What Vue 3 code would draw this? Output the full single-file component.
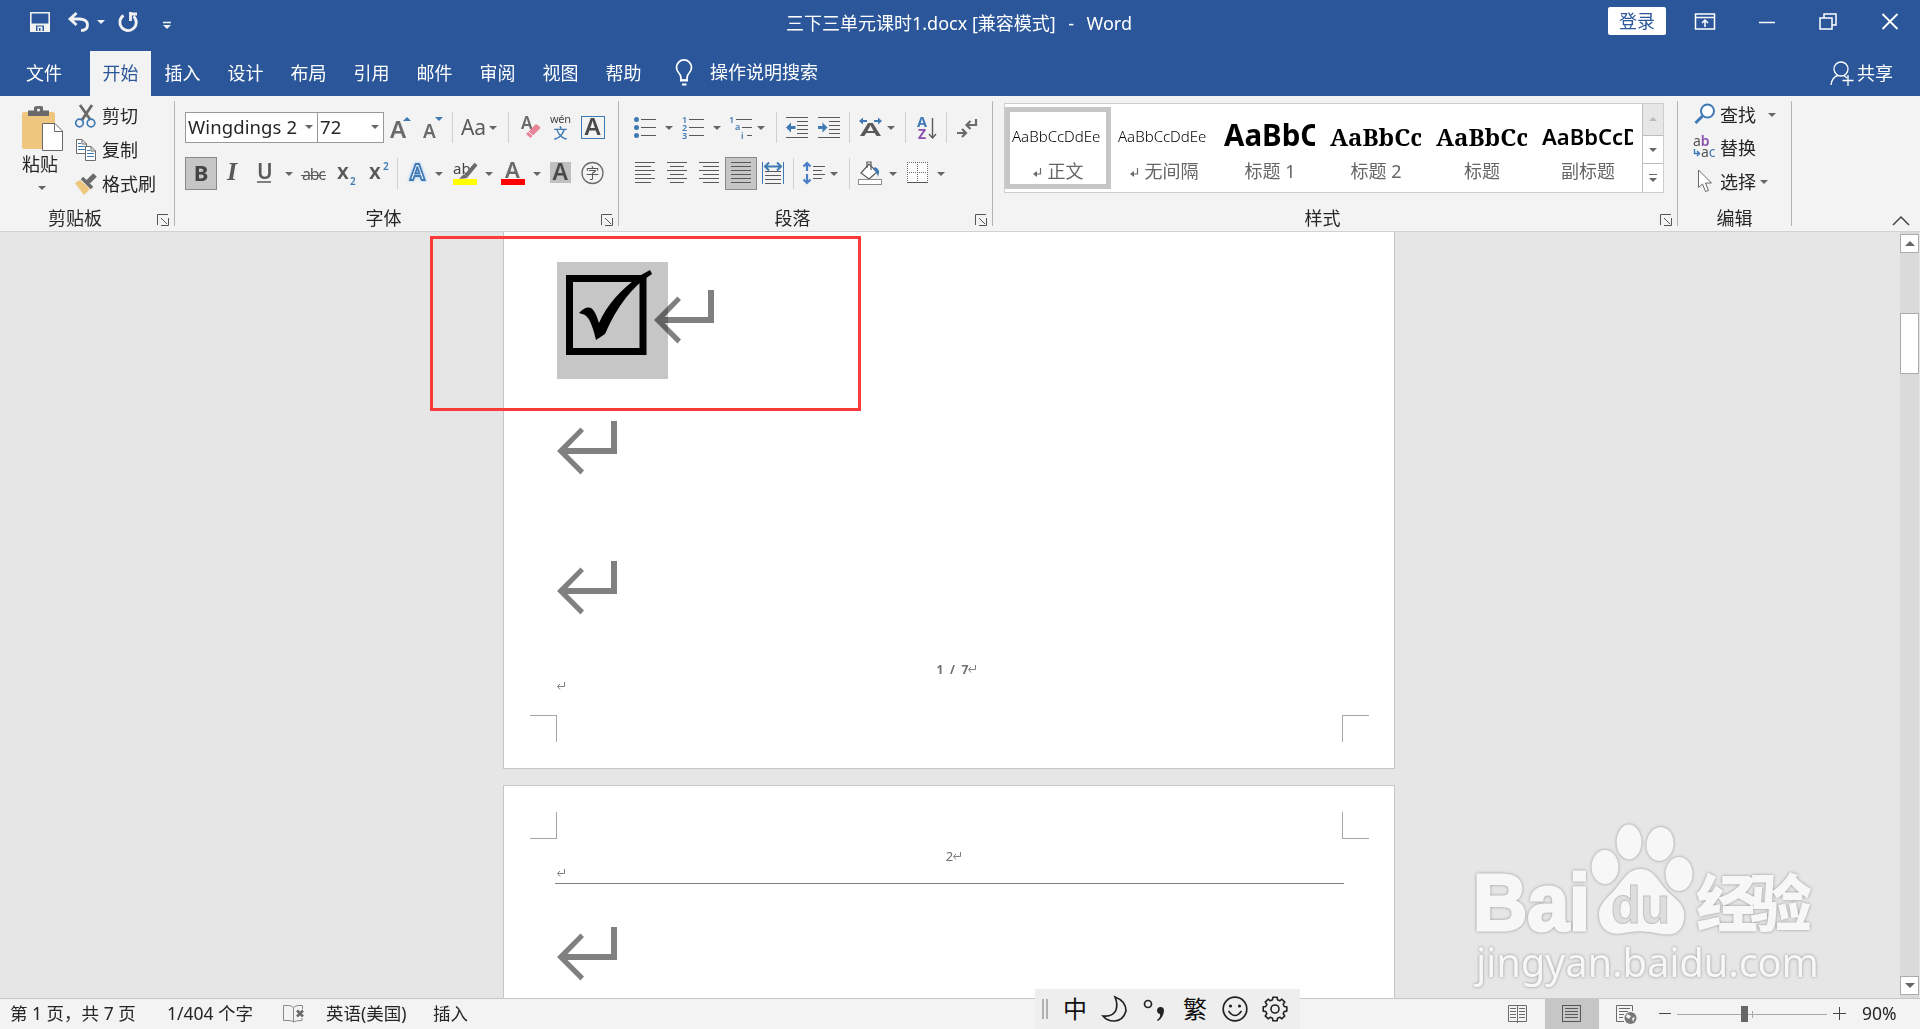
<template>
  <div class="word">
    <header class="title-bar">
      <div class="quick-access">
        <svg v-for="name in quickAccess" :key="name" :class="'qa-' + name" :width="icons[name].w" height="25" v-html="icons[name].body"></svg>
      </div>
      <div class="doc-title">三下三单元课时1.docx [兼容模式]<span class="dash">-</span>Word</div>
      <button class="login">登录</button>
      <div class="window-controls">
        <svg v-for="name in windowControls" :key="name" width="22" height="25" v-html="icons[name].body"></svg>
      </div>
    </header>

    <nav class="tab-bar">
      <span class="tab file">文件</span>
      <span class="tab active">开始</span>
      <span class="tab" v-for="tab in tabs" :key="tab">{{ tab }}</span>
      <svg class="bulb" width="20" height="30" v-html="icons.bulb.body"></svg>
      <span class="tell-me">操作说明搜索</span>
      <span class="share"><svg width="26" height="26" v-html="icons.share.body"></svg>共享</span>
    </nav>

    <section class="ribbon">
      <!-- 剪贴板 -->
      <div class="group clipboard">
        <div class="group-body">
          <div class="paste">
            <svg width="44" height="48" v-html="icons.paste.body"></svg>
            <span>粘贴</span>
            <i class="caret"></i>
          </div>
          <div class="side-list">
            <div v-for="item in clipboard" :key="item.label">
              <svg width="27" height="27" v-html="icons[item.icon].body"></svg>{{ item.label }}
            </div>
          </div>
        </div>
        <div class="group-name">剪贴板</div>
        <svg class="launcher" width="12" height="12" v-html="icons.launcher.body"></svg>
      </div>

      <!-- 字体 -->
      <div class="group font">
        <div class="group-body rows">
          <div class="tool-row font-top">
            <div class="combo name">Wingdings 2<i class="caret"></i></div>
            <div class="combo size">72<i class="caret"></i></div>
            <template v-for="(name, i) in fontTop" :key="i">
              <i v-if="name === 'caret'" class="caret"></i>
              <i v-else-if="name === 'sep'" class="sep"></i>
              <svg v-else :width="icons[name].w" height="25" v-html="icons[name].body"></svg>
            </template>
          </div>
          <div class="tool-row font-bottom">
            <div class="pressed">B</div>
            <template v-for="(name, i) in fontBottom" :key="i">
              <i v-if="name === 'caret'" class="caret"></i>
              <i v-else-if="name === 'sep'" class="sep"></i>
              <svg v-else :width="icons[name].w" height="25" v-html="icons[name].body"></svg>
            </template>
          </div>
        </div>
        <div class="group-name">字体</div>
        <svg class="launcher" width="12" height="12" v-html="icons.launcher.body"></svg>
      </div>

      <!-- 段落 -->
      <div class="group paragraph">
        <div class="group-body rows">
          <div class="tool-row para-top">
            <template v-for="(name, i) in paraTop" :key="i">
              <i v-if="name === 'caret'" class="caret"></i>
              <i v-else-if="name === 'sep'" class="sep"></i>
              <svg v-else :width="icons[name].w" height="25" v-html="icons[name].body"></svg>
            </template>
          </div>
          <div class="tool-row para-bottom">
            <template v-for="(name, i) in paraBottom" :key="i">
              <i v-if="name === 'caret'" class="caret"></i>
              <i v-else-if="name === 'sep'" class="sep"></i>
              <div v-else-if="name === 'justify'" class="pressed">
                <svg width="20" height="25" v-html="icons.justify.body"></svg>
              </div>
              <svg v-else :width="icons[name].w" height="25" v-html="icons[name].body"></svg>
            </template>
          </div>
        </div>
        <div class="group-name">段落</div>
        <svg class="launcher" width="12" height="12" v-html="icons.launcher.body"></svg>
      </div>

      <!-- 样式 -->
      <div class="group styles">
        <div class="group-body">
          <div class="gallery">
            <div class="style-card" v-for="(item, index) in styleList" :key="item.name" :class="{ selected: index === 0 }">
              <div class="sample" :class="item.cls"><span>{{ item.sample }}</span></div>
              <div class="style-name">
                <svg v-if="item.mark" width="12" height="12" v-html="icons.mark.body"></svg>{{ item.name }}
              </div>
            </div>
            <div class="gallery-scroll">
              <div class="off"><i class="caret up"></i></div>
              <div><i class="caret"></i></div>
              <div class="more"><i class="caret"></i></div>
            </div>
          </div>
        </div>
        <div class="group-name">样式</div>
        <svg class="launcher" width="12" height="12" v-html="icons.launcher.body"></svg>
      </div>

      <!-- 编辑 -->
      <div class="group editing">
        <div class="group-body side-list">
          <div v-for="item in editing" :key="item.label" :class="item.icon">
            <svg width="27" height="27" v-html="icons[item.icon].body"></svg>{{ item.label }}<i v-if="item.caret" class="caret"></i>
          </div>
        </div>
        <div class="group-name">编辑</div>
      </div>
      <svg class="collapse" width="18" height="12" v-html="icons.collapse.body"></svg>
    </section>

    <main class="workspace">
      <div class="pages">
        <article class="page first">
          <div class="line big">
            <span class="selection">
              <svg width="111" height="117" v-html="icons.checkbox.body"></svg>
            </span>
            <svg class="return overlap" width="60" height="54" viewBox="0 0 60 54"><path :d="returnPath" /></svg>
          </div>
          <div class="line second">
            <svg class="return" width="60" height="54" viewBox="0 0 60 54"><path :d="returnPath" /></svg>
          </div>
          <div class="line third">
            <svg class="return" width="60" height="54" viewBox="0 0 60 54"><path :d="returnPath" /></svg>
          </div>
          <div class="page-no"><b>1 / 7</b><svg width="9" height="9" v-html="icons.smallReturn.body"></svg></div>
          <div class="line small"><svg width="9" height="9" v-html="icons.smallReturn.body"></svg></div>
          <i class="crop bottom-left"></i>
          <i class="crop bottom-right"></i>
        </article>
        <article class="page second-page">
          <i class="crop top-left"></i>
          <i class="crop top-right"></i>
          <div class="page-no">2<svg width="9" height="9" v-html="icons.smallReturn.body"></svg></div>
          <div class="line header-end"><svg width="9" height="9" v-html="icons.smallReturn.body"></svg></div>
          <svg class="return" width="60" height="54" viewBox="0 0 60 54"><path :d="returnPath" /></svg>
        </article>
      </div>
      <div class="scrollbar">
        <div class="scroll-btn"><i class="caret up"></i></div>
        <div class="thumb"></div>
        <div class="scroll-btn down"><i class="caret"></i></div>
      </div>
      <div class="red-box"></div>
      <div class="watermark">
        <svg width="360" height="180" viewBox="0 0 360 180">
          <g class="paw">
            <ellipse cx="135" cy="89" rx="13.5" ry="17" />
            <ellipse cx="159" cy="64" rx="12.5" ry="17.5" />
            <ellipse cx="190" cy="66" rx="13.5" ry="17" transform="rotate(8 190 66)" />
            <ellipse cx="209" cy="96" rx="13.5" ry="17" />
            <path d="M171 91C184 91 188 104 199 115C210 124 216 130 214 141C212 155 203 158 191 156Q172 151 154 155C139 158 130 151 129 138C128 126 137 121 147 109C155 99 159 91 171 91Z" />
          </g>
          <text class="bai" x="3" y="152" textLength="117" lengthAdjust="spacingAndGlyphs">Bai</text>
          <text class="du" x="141" y="145" textLength="59" lengthAdjust="spacingAndGlyphs">du</text>
          <text class="jingyan" x="226" y="149" textLength="116">经验</text>
          <text class="site" x="6" y="199" textLength="343">jingyan.baidu.com</text>
        </svg>
      </div>
    </main>

    <footer class="status-bar">
      <span class="s-page">第 1 页，共 7 页</span>
      <span class="s-words">1/404 个字</span>
      <svg class="s-proof" width="22" height="20" v-html="icons.proof.body"></svg>
      <span class="s-lang">英语(美国)</span>
      <span class="s-mode">插入</span>
      <div class="view-modes">
        <svg width="20" height="20" v-html="icons.readView.body"></svg>
        <div class="current"><svg width="20" height="20" v-html="icons.printView.body"></svg></div>
        <svg width="21" height="20" v-html="icons.webView.body"></svg>
      </div>
      <svg class="zoom" width="187" height="20" v-html="icons.zoom.body"></svg>
      <span class="percent">90%</span>
    </footer>

    <div class="ime">
      <i class="grip"></i>
      <span>中</span>
      <svg width="26" height="28" v-html="icons.moon.body"></svg>
      <svg width="24" height="28" v-html="icons.punct.body"></svg>
      <span class="trad">繁</span>
      <svg width="26" height="28" v-html="icons.smile.body"></svg>
      <svg class="gear" width="26" height="28" v-html="icons.gear.body"></svg>
    </div>
  </div>
</template>

<script setup>
const tabs = ['插入', '设计', '布局', '引用', '邮件', '审阅', '视图', '帮助']
const quickAccess = ['save', 'undo', 'qaCaret', 'redo', 'customize']
const windowControls = ['ribbonDisplay', 'minimize', 'restore', 'close']

const clipboard = [
  { icon: 'cut', label: '剪切' },
  { icon: 'copy', label: '复制' },
  { icon: 'brush', label: '格式刷' }
]

const fontTop = ['grow', 'shrink', 'sep', 'changeCase', 'caret', 'sep', 'eraser', 'pinyin', 'boxA']
const fontBottom = ['italic', 'underline', 'caret', 'strike', 'sub', 'sup', 'sep', 'effect', 'caret', 'highlight', 'caret', 'fontColor', 'caret', 'shadeA', 'circled']
const paraTop = ['bullets', 'caret', 'numbers', 'caret', 'levels', 'caret', 'sep', 'outdent', 'indent', 'sep', 'asian', 'caret', 'sep', 'sort', 'sep', 'marks']
const paraBottom = ['left', 'center', 'right', 'justify', 'distribute', 'sep', 'spacing', 'caret', 'sep', 'bucket', 'caret', 'borders', 'caret']

const styleList = [
  { name: '正文', sample: 'AaBbCcDdEe', cls: 'body', mark: true },
  { name: '无间隔', sample: 'AaBbCcDdEe', cls: 'body', mark: true },
  { name: '标题 1', sample: 'AaBbC', cls: 'h1' },
  { name: '标题 2', sample: 'AaBbCc', cls: 'h2' },
  { name: '标题', sample: 'AaBbCc', cls: 'h2' },
  { name: '副标题', sample: 'AaBbCcD', cls: 'subtitle' }
]

const editing = [
  { icon: 'find', label: '查找', caret: true },
  { icon: 'replace', label: '替换' },
  { icon: 'select', label: '选择', caret: true }
]

// 回车符
const returnPath = 'M54 0H60V33H10.5L27 49.5L23.5 53.5L0 30L23.5 6.5L27 10L10.5 27H54Z'

// 画一组水平线：[x1, x2, y]
function lines(list, color = '#595959') {
  return list.map(([a, b, y]) => `<path d="M${a} ${y + 0.5}H${b}" stroke="${color}"/>`).join('')
}

const blue = '#3f7ab5'
const arrowLeft = `<path d="M0 11.5L5 6.5V10H9.5V13H5V16.5Z" fill="${blue}"/>`

const icons = {
  save: { w: 20, body: '<path d="M.8 .8H19.200V19.200H.8Z" fill="none" stroke="#f2f2f2" stroke-width="1.600"/><path d="M1 11.500H19V19.500H1Z" fill="#f2f2f2"/><path d="M6 13.500H14V19H6Z" fill="#2b579a"/><path d="M7.500 14.500H12.500V19H10.500V16H9V19H7.500Z" fill="#f2f2f2"/>' },
  undo: { w: 22, body: '<path d="M8.500 1L2 7L8.500 13M2 7H12Q19.500 7.500 19.500 13T13 18.500" fill="none" stroke="#f2f2f2" stroke-width="2.800"/>' },
  qaCaret: { w: 9, body: '<path d="M0 8H8L4 12Z" fill="#f2f2f2"/>' },
  redo: { w: 22, body: '<path d="M5.500 3.500A8.200 8.200 0 1 0 15.500 4.200M12.500 0V9M11.500 2H19" fill="none" stroke="#f2f2f2" stroke-width="2.800"/>' },
  customize: { w: 10, body: '<path d="M1 10.500H9" stroke="#f2f2f2" stroke-width="1.500"/><path d="M1 13H9L5 17Z" fill="#f2f2f2"/>' },
  ribbonDisplay: { body: '<path d="M1.500 2H20.500V17H1.500ZM1.500 5.500H20.500M11 15V8.500M8 11L11 8L14 11" fill="none" stroke="#fff" stroke-width="1.500"/>' },
  minimize: { body: '<path d="M3 10.500H19" stroke="#fff" stroke-width="1.500"/>' },
  restore: { body: '<path d="M3 6H15V17H3ZM7 6V2H19V13H15" fill="none" stroke="#fff" stroke-width="1.500"/>' },
  close: { body: '<path d="M3.500 2L18.500 17M18.500 2L3.500 17" stroke="#fff" stroke-width="1.800"/>' },
  bulb: { body: '<path d="M7 20V18Q7 15 4.500 12.500A7.500 7.500 0 1 1 15.500 12.500Q13 15 13 18V20Z" fill="none" stroke="#fff" stroke-width="1.700"/><path d="M6 20.500H14M8 24.500H12.500" stroke="#fff" stroke-width="2"/>' },
  share: { body: '<circle cx="11" cy="8" r="7" fill="none" stroke="#fff" stroke-width="1.300"/><path d="M1 24Q2 16 8 14.500M14 14.500L17 17M18 14V25M12.500 19.500H23.500" fill="none" stroke="#fff" stroke-width="1.300"/>' },
  paste: { body: '<rect x="1" y="7" width="33" height="37" rx="2" fill="#eec67d"/><path d="M7 11V5.500H13V2Q14 1 18 1T22 2V5.500H28V11Z" fill="#6a6a6a"/><circle cx="17.500" cy="5" r="1.500" fill="#f3f3f3"/><path d="M21.500 18.500H34L41.500 26V45.500H21.500Z" fill="#fff" stroke="#6a6a6a"/><path d="M33.500 18.500V26.500H41.500" fill="none" stroke="#6a6a6a"/>' },
  cut: { body: '<path d="M5 2L15.500 17M17 2L7 17" stroke="#6a6a6a" stroke-width="2.800"/><circle cx="4.500" cy="20" r="3.800" fill="none" stroke="#3f7ab5" stroke-width="1.700"/><circle cx="16" cy="20" r="3.800" fill="none" stroke="#3f7ab5" stroke-width="1.700"/>' },
  copy: { body: '<path d="M1.500 2.500H7L11.500 7V16.500H1.500ZM7 2.500V7H11.500" fill="#fff" stroke="#6a6a6a"/><path d="M3 6.500H6M3 9.500H10M3 12.500H10" stroke="#3f7ab5"/><path d="M10.500 9.500H16L20.500 14V23.500H10.500ZM16 9.500V14H20.500" fill="#fff" stroke="#6a6a6a"/><path d="M12 13.500H15M12 16.500H19M12 19.500H19" stroke="#3f7ab5"/>' },
  brush: { body: '<path d="M0 12L5 9L15 18L9 24Z" fill="#eec67d"/><path d="M20 4L13 11" stroke="#6a6a6a" stroke-width="5"/><path d="M7 7L17 17" stroke="#6a6a6a" stroke-width="3.500"/>' },
  launcher: { body: '<path d="M.5 11V.5H11M4 4L10 10M11.500 4V11.500H4" fill="none" stroke="#555"/>' },
  collapse: { body: '<path d="M1 10L9 2L17 10" fill="none" stroke="#444" stroke-width="1.500"/>' },
  find: { body: '<circle cx="14.500" cy="10" r="6.500" fill="#fff" stroke="#3f7ab5" stroke-width="2"/><path d="M9.500 15L2.500 22" stroke="#3f7ab5" stroke-width="3"/>' },
  replace: { body: '<text x="0" y="11" font-size="14" fill="#555">a<tspan fill="#8a4fae" font-weight="600">b</tspan></text><text x="8" y="22" font-size="14" fill="#555">a<tspan fill="#3f7ab5">c</tspan></text><path d="M1.500 14V18.500H6M4 16L6.500 18.500L4 21" fill="none" stroke="#3f7ab5" stroke-width="1.400"/>' },
  select: { body: '<path d="M5.500 2V19.500L9.500 16L12.500 23.500L15.500 22.500L12.500 15H18.500Z" fill="#fff" stroke="#6a6a6a"/>' },

  grow: { w: 22, body: '<text x="1" y="23" font-size="24" font-weight="600" fill="#6a6a6a">A</text><path d="M14 6L18 2L22 6Z" fill="#3f7ab5"/>' },
  shrink: { w: 22, body: '<text x="1" y="23" font-size="19" font-weight="600" fill="#6a6a6a">A</text><path d="M13 2H21L17 6Z" fill="#3f7ab5"/>' },
  changeCase: { w: 29, body: '<text x="1" y="20" font-size="21" fill="#595959" textLength="25">Aa</text>' },
  eraser: { w: 22, body: '<text x="0" y="14" font-size="17" font-weight="600" fill="#6a6a6a">A</text><path d="M5 19L15 9Q19 11 19.500 13L9.500 23Z" fill="#e8849a"/><path d="M7 16L13 22" stroke="#f3f3f3"/>' },
  pinyin: { w: 24, body: '<text x="1" y="8" font-size="11" fill="#444" textLength="21">wén</text><text x="4.500" y="22.500" font-size="14" fill="#3f7ab5" font-weight="500">文</text>' },
  boxA: { w: 24, body: '<rect x=".5" y="1.500" width="23" height="22" fill="none" stroke="#3f7ab5"/><text x="3.500" y="20" font-size="24" font-weight="600" fill="#4a4a4a">A</text>' },
  italic: { w: 20, body: '<text x="3" y="19" font-size="26" font-style="italic" font-weight="bold" fill="#595959" font-family="Liberation Serif">I</text>' },
  underline: { w: 20, body: '<text x="1" y="18" font-size="21" font-weight="600" fill="#595959">U</text><path d="M1 21H15" stroke="#595959" stroke-width="1.500"/>' },
  strike: { w: 26, body: '<text x="1" y="19" font-size="16" fill="#595959" textLength="24">abc</text><path d="M0 14.500H25" stroke="#595959"/>' },
  sub: { w: 22, body: '<text x="0" y="18" font-size="21" font-weight="600" fill="#595959">x</text><text x="13" y="24" font-size="10" fill="#3f7ab5" font-weight="600">2</text>' },
  sup: { w: 22, body: '<text x="0" y="18" font-size="21" font-weight="600" fill="#595959">x</text><text x="14" y="9" font-size="10" fill="#3f7ab5" font-weight="600">2</text>' },
  effect: { w: 24, body: '<text x="4" y="19" font-size="22" font-weight="600" fill="#fff" stroke="#3f7ab5" stroke-width="1.800" style="filter:drop-shadow(0 0 1.5px #8fc0f0)">A</text>' },
  highlight: { w: 26, body: '<text x="1" y="13" font-size="15" fill="#444">ab</text><path d="M24 3L14 15" stroke="#6a6a6a" stroke-width="4"/><path d="M12 13L16 17L7 18Z" fill="#6a6a6a"/><path d="M1 18H25V24H1Z" fill="#ff0"/>' },
  fontColor: { w: 24, body: '<text x="4" y="17" font-size="22" font-weight="600" fill="#6a6a6a">A</text><path d="M0 18H24V24H0Z" fill="red"/>' },
  shadeA: { w: 22, body: '<path d="M0 1H21V22H0Z" fill="#c0c0c0"/><text x="2.500" y="19" font-size="23" font-weight="600" fill="#4a4a4a">A</text>' },
  circled: { w: 24, body: '<circle cx="11.500" cy="12" r="10.500" fill="none" stroke="#6a6a6a" stroke-width="1.300"/><text x="4.800" y="17" font-size="13.500" fill="#595959">字</text>' },

  bullets: { w: 24, body: [4, 12, 20].map(y => `<circle cx="2.500" cy="${y + 0.5}" r="2.500" fill="${blue}"/>`).join('') + lines([[7, 22, 4], [7, 22, 12], [7, 22, 20]]) },
  numbers: { w: 24, body: [1, 2, 3].map(n => `<text x="0" y="${n * 8}" font-size="9" font-weight="600" fill="${blue}">${n}</text>`).join('') + lines([[7, 22, 4], [7, 22, 12], [7, 22, 20]]) },
  levels: { w: 25, body: `<text x="0" y="8" font-size="9" font-weight="600" fill="${blue}">1</text><text x="6" y="15" font-size="9" font-weight="600" fill="${blue}">a</text><text x="12" y="24" font-size="9" font-weight="600" fill="${blue}">i</text>` + lines([[7, 23, 4], [13, 23, 12], [18, 23, 20]]) },
  outdent: { w: 24, body: lines([[0, 22, 2], [11, 22, 6], [11, 22, 10], [11, 22, 14], [11, 22, 18], [0, 22, 22]]) + `<g transform="translate(0 1)">${arrowLeft}</g>` },
  indent: { w: 24, body: lines([[0, 22, 2], [11, 22, 6], [11, 22, 10], [11, 22, 14], [11, 22, 18], [0, 22, 22]]) + `<g transform="matrix(-1 0 0 1 9.500 1)">${arrowLeft}</g>` },
  asian: { w: 24, body: '<text x="1" y="21" font-size="17" font-weight="600" fill="#595959" textLength="21" lengthAdjust="spacingAndGlyphs">A</text><path d="M0 6L4 2.500V9.500ZM23 6L19 2.500V9.500Z" fill="#3f7ab5"/><path d="M2 6H8M15 6H21" stroke="#3f7ab5" stroke-width="2"/>' },
  sort: { w: 22, body: '<text x="0" y="12" font-size="14.500" font-weight="bold" fill="#3f7ab5">A</text><text x="1" y="24" font-size="14" font-weight="bold" fill="#8a4fae">Z</text><path d="M15.500 3V23M12 19L15.500 23L19 19" fill="none" stroke="#595959" stroke-width="1.400"/>' },
  marks: { w: 22, body: '<path d="M19 4V10H10M13.500 6L9.500 10L13.500 14" fill="none" stroke="#6a6a6a" stroke-width="2.200"/><path d="M0 18H8M5 14L9 18L5 22" fill="none" stroke="#6a6a6a" stroke-width="2.200"/>' },
  left: { w: 22, body: lines([[0, 20, 1], [0, 16, 5], [0, 20, 9], [0, 16, 13], [0, 20, 17], [0, 16, 21]]) },
  center: { w: 22, body: lines([[0, 20, 1], [3, 17, 5], [0, 20, 9], [3, 17, 13], [0, 20, 17], [3, 17, 21]]) },
  right: { w: 22, body: lines([[0, 20, 1], [4, 20, 5], [0, 20, 9], [4, 20, 13], [0, 20, 17], [4, 20, 21]]) },
  justify: { w: 20, body: lines([[0, 20, 1], [0, 20, 5], [0, 20, 9], [0, 20, 13], [0, 20, 17], [0, 20, 21]]) },
  distribute: { w: 24, body: '<path d="M.5 1V23M21.500 1V23" stroke="#3f7ab5"/><path d="M3 5.500H19M7 1.500L3 5.500L7 9.500M15 1.500L19 5.500L15 9.500" fill="none" stroke="#3f7ab5" stroke-width="2"/>' + lines([[3, 19, 10], [3, 19, 14], [3, 19, 18], [3, 19, 22]]) },
  spacing: { w: 26, body: '<path d="M5 2V10M1.500 5.500L5 2L8.500 5.500M5 13V22M1.500 18.500L5 22L8.500 18.500" fill="none" stroke="#4a7fc8" stroke-width="2.200"/>' + lines([[11, 23, 5], [11, 20, 9], [11, 23, 13], [11, 20, 17]]) },
  bucket: { w: 26, body: '<path d="M4 12L12 3L20 11L12 18Z" fill="#fff" stroke="#595959" stroke-width="1.200"/><path d="M10 7V1H14V9" fill="none" stroke="#595959" stroke-width="1.200"/><path d="M18 6Q24 8 21 16Q20 11 16 8Z" fill="#3f7ab5"/><rect x="1.500" y="18.500" width="23" height="5" fill="#fff" stroke="#8a8a8a"/>' },
  borders: { w: 22, body: '<path d="M0 1H21V22H0Z" fill="#fff"/><path d="M0 1.500H21M0 11.500H21M.5 1V21M10.500 1V21M20.500 1V21" stroke="#6a6a6a" stroke-dasharray="1 1"/><path d="M0 21.500H21" stroke="#555"/>' },
  mark: { body: '<path d="M7.500 3V9H3" fill="none" stroke="#6a6a6a" stroke-width="1.200"/><path d="M0 9L4 6V12Z" fill="#6a6a6a"/>' },

  checkbox: { body: '<rect x="12.500" y="16.500" width="73.500" height="73" fill="none" stroke="#000" stroke-width="7"/><path d="M22 51Q29 44 34 46Q38 48 42 61Q53 35 84 13L93 8L95 12Q66 30 48 72L39 78Q33 52 25 52Z" fill="#000"/>' },
  smallReturn: { body: '<path d="M7.500 0V4.500H1M3 2L.5 4.500L3 7.500" fill="none" stroke="#808080"/>' },
  proof: { body: '<path d="M10.500 3.500Q8 1.500 6 1.500H.5V16.500H6Q9 16.500 10.500 18V3.500Q13 1.500 15 1.500H19.500V5M10.500 18Q12 16.500 19 16.500V14" fill="none" stroke="#8a8a8a"/><path d="M14 6.500L20 12.500M20 6.500L14 12.500" stroke="#6a6a6a" stroke-width="2.500"/>' },
  readView: { body: '<path d="M.5 1.500H9.500V17.500H.5ZM9.500 1.500H18.500V17.500H9.500Z" fill="none" stroke="#6a6a6a"/><path d="M2 4.500H8M2 7.500H8M2 10.500H8M2 13.500H8M11 4.500H17M11 7.500H17M11 10.500H17M11 13.500H17M9.500 1V19" stroke="#6a6a6a"/>' },
  printView: { body: '<rect x=".5" y="1.500" width="18" height="16" fill="none" stroke="#555"/>' + lines([[3, 16, 4], [3, 16, 7], [3, 16, 10], [3, 16, 13]]) },
  webView: { body: '<path d="M8 17.500H.5V1.500H16.500V7" fill="none" stroke="#6a6a6a"/><path d="M3 4.500H14M3 7.500H12M3 10.500H8M3 13.500H7" stroke="#6a6a6a"/><circle cx="14.500" cy="14" r="6" fill="#777"/><path d="M11 10L15 12L13 15L10 13ZM16 14L19 13L17 18Z" fill="#f3f3f3"/>' },
  zoom: { body: '<path d="M0 9.500H12M174 9.500H187M180.500 3V16" stroke="#444"/><path d="M18 10.500H168" stroke="#aaa"/><path d="M93.500 7V14" stroke="#aaa"/><rect x="82" y="2" width="7" height="16" fill="#666"/>' },

  moon: { body: '<path d="M13 2Q24 6 24 16Q21 26 12 26Q5 26 1 21Q11 22 14 15Q16 9 13 2Z" fill="none" stroke="#222" stroke-width="1.700"/>' },
  punct: { body: '<circle cx="5" cy="9" r="3.500" fill="none" stroke="#222" stroke-width="1.700"/><path d="M14 25Q18 22 17 19A3.500 3.500 0 1 1 21 15Q21 22 15 26Z" fill="#222"/>' },
  smile: { body: '<circle cx="13" cy="14" r="11.800" fill="none" stroke="#222" stroke-width="1.700"/><circle cx="8.500" cy="11" r="1.600" fill="#222"/><circle cx="17.500" cy="11" r="1.600" fill="#222"/><path d="M6.500 16Q13 25 19.500 16" fill="none" stroke="#222" stroke-width="1.600"/>' },
  gear: { body: `<path d="${gearPath()}" fill="none" stroke="#222" stroke-width="1.600" stroke-linejoin="round"/><circle cx="13" cy="14" r="4" fill="none" stroke="#222" stroke-width="1.600"/>` }
}

// 八齿齿轮轮廓
function gearPath() {
  const points = []
  for (let i = 0; i < 8; i++) {
    const steps = [[-15, 9.5], [-10, 12], [10, 12], [15, 9.5]]
    for (const [offset, r] of steps) {
      const a = ((i * 45 + offset) * Math.PI) / 180
      points.push(`${(13 + r * Math.cos(a)).toFixed(1)} ${(14 + r * Math.sin(a)).toFixed(1)}`)
    }
  }
  return 'M' + points.join('L') + 'Z'
}
</script>

<style>
body {
  margin: 0;
  overflow: hidden;
}
</style>

<style scoped>
.word {
  position: relative;
  display: flex;
  flex-direction: column;
  width: 1920px;
  height: 1029px;
  overflow: hidden;
  background: #e6e6e6;
  font-family: "Noto Sans", "Noto Sans CJK SC", sans-serif;
  font-size: 18px;
  color: #262626;
}

svg {
  display: block;
  flex-shrink: 0;
  overflow: visible;
}

.caret {
  display: block;
  width: 0;
  height: 0;
  border: 4px solid transparent;
  border-top-color: #666;
  border-bottom: 0;
  flex-shrink: 0;
}

.caret.up {
  border-top: 0;
  border-bottom: 4px solid #666;
}

/* 标题栏 */
.title-bar {
  display: flex;
  height: 51px;
  background: #2b579a;
  color: #fff;
}

.quick-access {
  display: flex;
  width: 786px;
  padding: 12px 0 0 30px;
  box-sizing: border-box;
}

.qa-undo { margin-left: 18px; }
.qa-qaCaret { margin-left: 7px; }
.qa-redo { margin-left: 12px; }
.qa-customize { margin-left: 22px; }

.doc-title {
  width: 822px;
  line-height: 47px;
  font-size: 18px;
  white-space: pre;
}

.dash {
  margin: 0 12.5px;
}

.login {
  width: 58px;
  height: 28px;
  margin-top: 7px;
  padding: 0;
  border: 0;
  border-radius: 2px;
  background: #fff;
  color: #2b579a;
  font-family: inherit;
  font-size: 18px;
  line-height: 26px;
}

.window-controls {
  display: flex;
  gap: 39.5px;
  padding: 12px 0 0 28px;
}

/* 选项卡 */
.tab-bar {
  display: flex;
  height: 45px;
  background: #2b579a;
  color: #fff;
  line-height: 44px;
}

.tab {
  width: 63px;
  text-align: center;
}

.tab.file {
  width: 90px;
  text-indent: -2px;
}

.tab.active {
  width: 61px;
  background: #f3f3f3;
  color: #2b579a;
}

.bulb {
  margin: 9px 0 0 19px;
}

.tell-me {
  margin-left: 16px;
  line-height: 42px;
}

.share {
  display: flex;
  gap: 1px;
  margin: 0 27px 0 auto;
}

.share svg {
  margin-top: 10px;
}

/* 功能区 */
.ribbon {
  display: flex;
  position: relative;
  height: 135px;
  background: #f3f3f3;
  border-bottom: 1px solid #d2d2d2;
}

.group {
  display: flex;
  flex-direction: column;
  position: relative;
  box-sizing: border-box;
  height: 125px;
  margin-top: 5px;
  border-right: 1px solid #b4b4b4;
}

.group.clipboard { width: 175px; }
.group.font { width: 444px; }
.group.paragraph { width: 374px; }
.group.styles { width: 685px; }
.group.editing { width: 114px; }

.group-body {
  height: 103px;
}

.group-name {
  text-align: center;
  line-height: 28px;
  height: 22px;
}

.clipboard .group-name { padding-right: 24px; }
.font .group-name { padding-right: 26px; }
.paragraph .group-name { padding-right: 26px; }
.styles .group-name { padding-right: 25px; }

.launcher {
  position: absolute;
  right: 5px;
  bottom: 0;
}

.collapse {
  position: absolute;
  right: 10px;
  bottom: 4px;
}

.clipboard .group-body {
  display: flex;
}

.paste {
  display: flex;
  flex-direction: column;
  align-items: center;
  width: 71px;
  padding: 4px 0 0 9px;
  box-sizing: border-box;
}

.paste svg {
  margin-left: 5px;
}

.paste span {
  line-height: 22px;
}

.paste .caret {
  margin-top: 11px;
  margin-left: 3px;
}

.side-list > div {
  display: flex;
  align-items: center;
  height: 34px;
  line-height: 34px;
  white-space: nowrap;
}

.clipboard .side-list {
  margin-top: -2px;
}

.clipboard .side-list > div {
  padding-left: 4px;
}

.tool-row {
  display: grid;
  align-items: center;
}

.font-top,
.para-top {
  height: 31px;
  margin-top: 11px;
}

.font-bottom,
.para-bottom {
  height: 33px;
  margin-top: 14px;
}

.font-top {
  margin-left: 10px;
  grid-template-columns: 132px 72px 33px 30px 8px 29px 19px 13px 28px 32px 24px;
}

.font-bottom {
  margin-left: 10px;
  grid-template-columns: 39px 32px 29px 16px 36px 32px 28px 9px 29px 17px 33px 16px 32px 17px 31px 24px;
}

.para-top {
  margin-left: 15px;
  grid-template-columns: 31px 17px 31px 16px 28px 19px 10px 32px 31px 10px 28px 18px 12px 29px 11px 20px;
}

.para-bottom {
  margin-left: 16px;
  grid-template-columns: 32px 32px 26px 37px 31px 9px 28px 19px 8px 32px 18px 30px 8px;
}

.sep {
  width: 1px;
  height: 31px;
  background: #d0d0d0;
}

.combo {
  display: flex;
  align-items: center;
  justify-content: space-between;
  box-sizing: border-box;
  height: 31px;
  padding: 0 4px 0 2px;
  background: #fff;
  border: 1px solid #999;
  font-size: 18.5px;
  line-height: 25px;
  padding-bottom: 2px;
  letter-spacing: 0.1px;
  white-space: nowrap;
}

.combo.name { width: 133px; }
.combo.size { width: 67px; }

.pressed {
  display: flex;
  align-items: center;
  justify-content: center;
  box-sizing: border-box;
  width: 32px;
  height: 33px;
  background: #c6c6c6;
  border: 1px solid #8a8a8a;
  font-size: 22px;
  font-weight: bold;
  line-height: 26px;
  color: #444;
}

.font-bottom .pressed {
  padding-bottom: 3px;
}

/* 样式库 */
.gallery {
  display: flex;
  box-sizing: border-box;
  width: 660px;
  height: 90px;
  margin: 2px 0 0 11px;
  background: #fff;
  border: 1px solid #cdcdcd;
}

.style-card {
  box-sizing: border-box;
  width: 106px;
  height: 82px;
  margin-top: 3px;
  border: 5px solid transparent;
}

.style-card.selected {
  border-color: #c6c6c6;
}

.sample {
  display: flex;
  align-items: center;
  width: 91px;
  height: 48px;
  margin-left: 2px;
  overflow: hidden;
  color: #000;
  white-space: nowrap;
}

.sample.body {
  font-size: 15px;
  font-weight: 300;
}

.sample.h1 {
  font-size: 29.5px;
  font-weight: bold;
}

.sample.h1 span {
  margin-top: -3px;
}

.sample.h2 {
  font-family: "Noto Serif", "Liberation Serif", serif;
  font-size: 24px;
  font-weight: bold;
}

.sample.subtitle {
  font-size: 22px;
  font-weight: 600;
}

.style-name {
  display: flex;
  align-items: center;
  justify-content: center;
  gap: 3px;
  line-height: 22px;
  color: #666;
}

.gallery-scroll {
  display: flex;
  flex-direction: column;
  width: 20px;
  margin-left: auto;
  border-left: 1px solid #bdbdbd;
}

.gallery-scroll div {
  display: flex;
  flex: 1;
  align-items: center;
  justify-content: center;
}

.gallery-scroll div + div {
  border-top: 1px solid #bdbdbd;
}

.gallery-scroll .off {
  flex: 1.12;
  background: #e6e6e6;
}

.gallery-scroll .off .caret {
  border-bottom-color: #bbb;
}

.gallery-scroll .more .caret {
  position: relative;
  top: 2px;
}

.gallery-scroll .more .caret::before {
  content: '';
  position: absolute;
  left: -4px;
  top: -8px;
  width: 8px;
  height: 1px;
  background: #666;
}

.editing .side-list {
  padding-left: 15px;
  margin-top: -3px;
  height: 106px;
}

.editing .side-list > div {
  height: 33.5px;
}

.editing .find .caret { margin-left: 12px; }
.editing .select .caret { margin-left: 4px; }

/* 文档区 */
.workspace {
  display: flex;
  position: relative;
  height: 766px;
  overflow: hidden;
}

.pages {
  width: 892px;
  margin: 0 auto 0 503px;
}

.page {
  position: relative;
  box-sizing: border-box;
  padding-left: 53px;
  background: #fff;
  border: 1px solid #c6c6c6;
}

.page.first {
  height: 537px;
  padding-top: 30px;
  border-top: 0;
}

.page.second-page {
  height: 300px;
  margin-top: 16px;
}

.line {
  display: flex;
}

.line.big { height: 159px; }
.line.second { height: 140px; }
.line.third { height: 98px; }

.selection {
  width: 111px;
  height: 117px;
  background: #c6c6c6;
}

.return {
  fill: #808080;
}

.return.overlap {
  margin: 28px 0 0 -14px;
  mix-blend-mode: multiply;
}

.page-no {
  display: flex;
  align-items: center;
  justify-content: center;
  height: 20px;
  padding-right: 37px;
  font-size: 12px;
  color: #707070;
}

.page-no b {
  word-spacing: 3.5px;
}

.line.small {
  margin-top: 3px;
}

.second-page .page-no {
  margin-top: 60px;
  padding-right: 43px;
  font-size: 13px;
}

.header-end {
  width: 787px;
  height: 14px;
  margin-left: -2px;
  padding-left: 2px;
  margin-top: 3px;
  border-bottom: 1px solid #808080;
}

.second-page .return {
  margin-top: 43px;
}

.crop {
  position: absolute;
  box-sizing: border-box;
  width: 27px;
  height: 27px;
  border: 0 solid #a6a6a6;
}

.bottom-left { left: 26px; bottom: 26px; border-width: 1px 1px 0 0; }
.bottom-right { right: 25px; bottom: 26px; border-width: 1px 0 0 1px; }
.top-left { left: 26px; top: 26px; border-width: 0 1px 1px 0; }
.top-right { right: 25px; top: 26px; border-width: 0 0 1px 1px; }

.scrollbar {
  display: flex;
  flex-direction: column;
  width: 19px;
  margin-right: 1px;
  padding: 2px 0 3px;
  background: #dadada;
}

.scroll-btn {
  display: flex;
  align-items: center;
  justify-content: center;
  box-sizing: border-box;
  height: 19px;
  background: #fff;
  border: 1px solid #ababab;
}

.scroll-btn .caret {
  border-width: 5px;
  border-bottom-width: 0;
}

.scroll-btn .caret.up {
  border-width: 0 5px 5px;
}

.scroll-btn.down {
  margin-top: auto;
}

.thumb {
  box-sizing: border-box;
  height: 61px;
  margin-top: 60px;
  background: #fff;
  border: 1px solid #ababab;
}

.red-box {
  position: absolute;
  left: 430px;
  top: 4px;
  box-sizing: border-box;
  width: 431px;
  height: 175px;
  border: 3px solid #fc3a3a;
}

.watermark {
  position: absolute;
  left: 1470px;
  top: 546px;
  filter: drop-shadow(0 0 1.5px rgba(90, 90, 90, 0.6));
}

.watermark svg {
  fill: #f7f7f7;
}

.watermark .bai {
  font-family: "Liberation Sans", sans-serif;
  font-weight: bold;
  font-size: 80px;
  stroke: #f7f7f7;
  stroke-width: 3;
}

.watermark .du {
  font-family: "Liberation Sans", sans-serif;
  font-weight: bold;
  font-size: 52px;
  fill: #dedede;
  stroke: #c2c2c2;
}

.watermark .jingyan {
  font-family: "Noto Sans CJK SC", sans-serif;
  font-weight: 900;
  font-size: 62px;
}

.watermark .site {
  font-size: 40px;
}

/* 状态栏 */
.status-bar {
  display: flex;
  align-items: center;
  box-sizing: border-box;
  height: 31px;
  padding-left: 10px;
  background: #f3f3f3;
  border-top: 1px solid #c6c6c6;
  font-size: 17.5px;
  white-space: nowrap;
}

.status-bar > span {
  line-height: 26px;
  padding-bottom: 3px;
}

.s-page { width: 157px; }
.s-words { width: 116px; }
.s-proof { margin-right: 21px; }
.s-lang { width: 107px; }

.view-modes {
  display: flex;
  align-items: center;
  margin-left: auto;
  gap: 17px;
}

.view-modes .current {
  display: flex;
  align-items: center;
  justify-content: center;
  width: 54px;
  height: 30px;
  background: #c6c6c6;
}

.zoom {
  margin: 0 16px 0 22px;
}

.percent {
  width: 58px;
}

/* 输入法浮动条 */
.ime {
  position: absolute;
  left: 1035px;
  top: 989px;
  display: flex;
  align-items: center;
  box-sizing: border-box;
  width: 265px;
  height: 40px;
  padding-left: 7px;
  gap: 15px;
  background: #eee;
  font-size: 24px;
  line-height: 38px;
  color: #111;
}

.ime .trad {
  margin-left: 1px;
}

.ime .gear {
  margin-left: -1px;
}

.grip {
  width: 2px;
  height: 20px;
  border: solid #b0b0b0;
  border-width: 0 2px;
}
</style>
